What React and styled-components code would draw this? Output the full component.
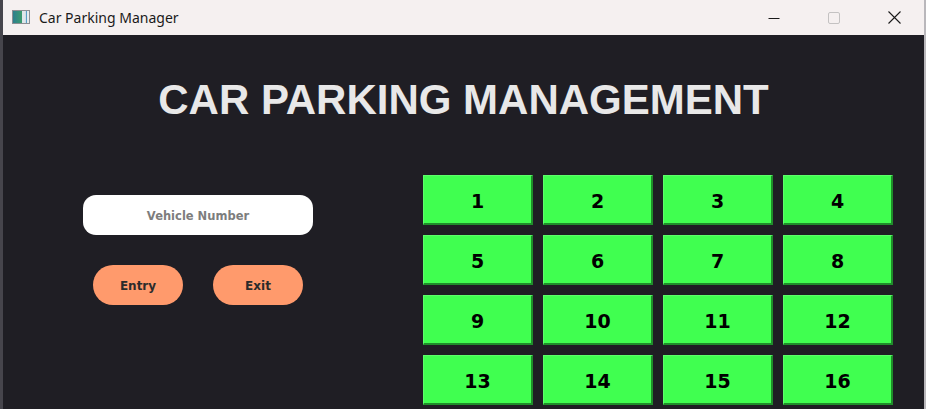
import React from "react";
import styled, { createGlobalStyle } from "styled-components";

const GlobalStyle = createGlobalStyle`
  html, body {
    margin: 0;
    padding: 0;
    background: #1f1e24;
    overflow: hidden;
  }
`;

// la fenetre complete
const Window = styled.div`
  width: 926px;
  height: 409px;
  display: flex;
  flex-direction: column;
  background: #1f1e24;
  box-sizing: border-box;
  border-left: 3px solid #46454c;
  border-right: 2px solid #b9b7bb;
`;

const TitleBar = styled.div`
  height: 35px;
  flex: none;
  display: flex;
  align-items: center;
  background: #f5f0f0;
  font-family: "Noto Sans", "Open Sans", sans-serif;
  font-size: 14px;
  color: #1a1a1a;
`;

const AppIcon = styled.div`
  width: 16px;
  height: 12px;
  margin: 0 9px 1px 9px;
  border: 1px solid #8d8f93;
  background: linear-gradient(90deg, #2e7f8e 0%, #3b9b6f 55%, #dfe6ea 56%, #dfe6ea 78%, #5aa0c6 79%, #5aa0c6 86%, #e6ebee 87%);
`;

const WindowTitle = styled.span`
  flex: 1;
`;

const Control = styled.div`
  width: 60px;
  height: 35px;
  display: flex;
  align-items: center;
  justify-content: center;
`;

const Body = styled.div`
  flex: 1;
  display: flex;
  flex-direction: column;
  padding-top: 41px;
`;

const Heading = styled.h1`
  margin: 0;
  text-align: center;
  font-family: "Liberation Sans", Arial, sans-serif;
  font-weight: 700;
  font-size: 42px;
  line-height: 48px;
  color: #e8e8e8;
`;

const Main = styled.div`
  display: flex;
  margin-top: 51px;
  padding-left: 80px;
`;

const LeftPanel = styled.div`
  width: 230px;
  margin-right: 110px;
  padding-top: 20px;
  display: flex;
  flex-direction: column;
  gap: 30px;
`;

const VehicleInput = styled.input`
  width: 230px;
  height: 40px;
  box-sizing: border-box;
  border: none;
  border-radius: 13px;
  background: #ffffff;
  text-align: center;
  font-family: "DejaVu Sans", Verdana, sans-serif;
  font-weight: 700;
  font-size: 11.5px;
  padding-top: 2px;
  color: #333;
  outline: none;
  &::placeholder {
    color: #7d7d7d;
  }
`;

const ButtonRow = styled.div`
  display: flex;
  gap: 30px;
  padding-left: 10px;
`;

const PillButton = styled.button`
  width: 90px;
  height: 40px;
  border: none;
  border-radius: 20px;
  background: #ff9a6c;
  color: #2b2b2b;
  font-family: "DejaVu Sans", Verdana, sans-serif;
  font-weight: 700;
  font-size: 12px;
  padding-top: 3px;
  cursor: pointer;
`;

const SlotGrid = styled.div`
  display: grid;
  grid-template-columns: repeat(4, 110px);
  grid-auto-rows: 50px;
  gap: 10px;
`;

const Slot = styled.div`
  box-sizing: border-box;
  display: flex;
  align-items: center;
  justify-content: center;
  padding-top: 2px;
  background: ${({ free }) => (free ? "#40ff50" : "#ff4040")};
  border-top: 1px solid #5cff6a;
  border-left: 1px solid #5cff6a;
  border-right: 2px solid #1f8e2a;
  border-bottom: 2px solid #1f8e2a;
  font-family: "DejaVu Sans", Verdana, sans-serif;
  font-weight: 700;
  font-size: 19px;
  color: #000;
`;

const slots = Array.from({ length: 16 }, (_, i) => ({ id: i + 1, free: true }));

const App = () => {
  return (
    <Window>
      <GlobalStyle />
      <TitleBar>
        <AppIcon />
        <WindowTitle>Car Parking Manager</WindowTitle>
        <Control>
          <svg width="12" height="12" viewBox="0 0 12 12">
            <path d="M0.5 6.5h11" stroke="#1a1a1a" strokeWidth="1" />
          </svg>
        </Control>
        <Control>
          <svg width="12" height="12" viewBox="0 0 12 12">
            <rect x="0.5" y="0.5" width="11" height="11" rx="1.5" fill="none" stroke="#c4c2c2" strokeWidth="1" />
          </svg>
        </Control>
        <Control>
          <svg width="13" height="13" viewBox="0 0 13 13">
            <path d="M0.5 0.5l12 12M12.5 0.5l-12 12" stroke="#1a1a1a" strokeWidth="1.1" />
          </svg>
        </Control>
      </TitleBar>
      <Body>
        <Heading>CAR PARKING MANAGEMENT</Heading>
        <Main>
          <LeftPanel>
            <VehicleInput placeholder="Vehicle Number" />
            <ButtonRow>
              <PillButton>Entry</PillButton>
              <PillButton>Exit</PillButton>
            </ButtonRow>
          </LeftPanel>
          <SlotGrid>
            {slots.map((s) => (
              <Slot key={s.id} free={s.free}>
                {s.id}
              </Slot>
            ))}
          </SlotGrid>
        </Main>
      </Body>
    </Window>
  );
};

export default App;
